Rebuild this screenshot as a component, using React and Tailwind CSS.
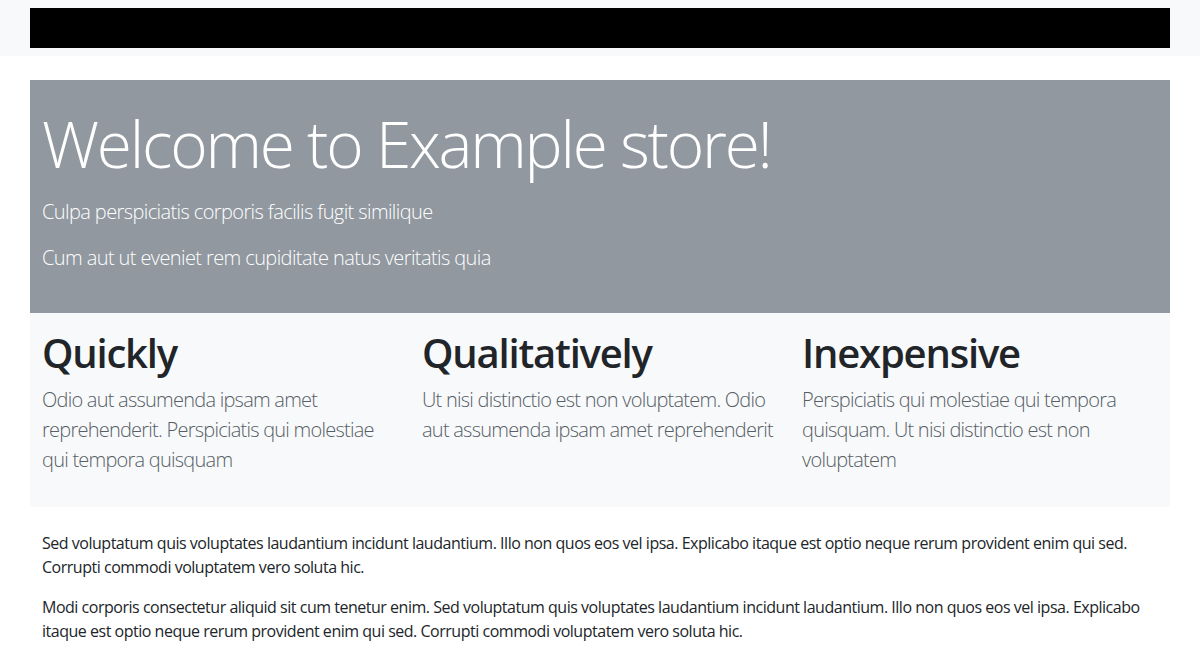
import React from 'react';

const features = [
  {
    title: 'Quickly',
    text: 'Odio aut assumenda ipsam amet reprehenderit. Perspiciatis qui molestiae qui tempora quisquam',
  },
  {
    title: 'Qualitatively',
    text: 'Ut nisi distinctio est non voluptatem. Odio aut assumenda ipsam amet reprehenderit',
  },
  {
    title: 'Inexpensive',
    text: 'Perspiciatis qui molestiae qui tempora quisquam. Ut nisi distinctio est non voluptatem',
  },
];

const App = () => {
  return (
    <div className="min-h-screen bg-white text-[#212529] font-['Open_Sans','Noto_Sans',sans-serif]">
      {/* navbar */}
      <nav className="bg-[#f8f9fa] py-2">
        <div className="w-[1140px] mx-auto h-10 bg-black" />
      </nav>

      <main className="w-[1140px] mx-auto mt-6">
        {/* jumbotron */}
        <section className="bg-[#91989f] text-white px-3 pt-6 pb-6">
          <h1 className="text-[64px] leading-[1.2] font-light tracking-[-0.035em] pt-[2px] mb-[14px]">Welcome to Example store!</h1>
          <p className="text-[20px] leading-[30px] font-light tracking-[-0.03em] mb-4">Culpa perspiciatis corporis facilis fugit similique</p>
          <p className="text-[20px] leading-[30px] font-light tracking-[-0.03em] mb-4">Cum aut ut eveniet rem cupiditate natus veritatis quia</p>
        </section>

        {/* features */}
        <section className="bg-[#f8f9fa] grid grid-cols-3 pt-4 pb-4">
          {features.map((f) => (
            <div key={f.title} className="px-3">
              <h2 className="text-[40px] leading-[1.2] font-semibold tracking-[-0.03em] mb-2">{f.title}</h2>
              <p className="text-[20px] leading-[30px] font-light tracking-[-0.038em] text-[#565e66] mb-4">{f.text}</p>
            </div>
          ))}
        </section>

        {/* about */}
        <section className="px-3 pt-6 text-base leading-6 tracking-[-0.03em]">
          <p className="mb-4">
            Sed voluptatum quis voluptates laudantium incidunt laudantium. Illo non quos eos vel ipsa. Explicabo itaque est optio neque rerum provident enim qui sed. Corrupti commodi voluptatem vero soluta hic.
          </p>
          <p className="mb-4">
            Modi corporis consectetur aliquid sit cum tenetur enim. Sed voluptatum quis voluptates laudantium incidunt laudantium. Illo non quos eos vel ipsa. Explicabo itaque est optio neque rerum provident enim qui sed. Corrupti commodi voluptatem vero soluta hic.
          </p>
        </section>
      </main>
    </div>
  );
};

export default App;
